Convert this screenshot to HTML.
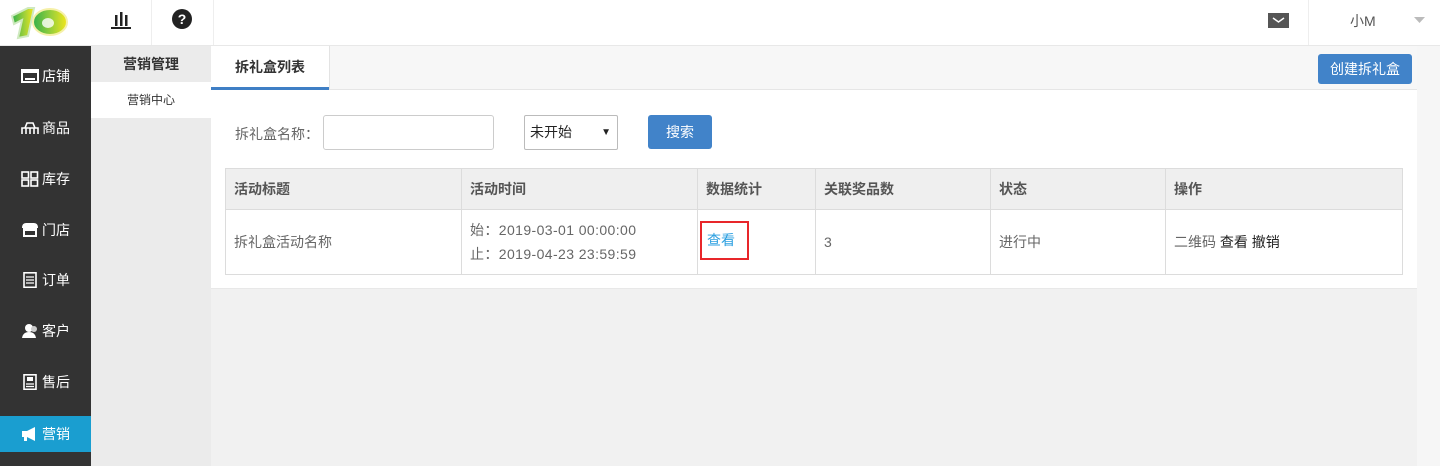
<!DOCTYPE html>
<html><head><meta charset="utf-8"><style>
*{margin:0;padding:0;box-sizing:border-box}
body{width:1440px;height:466px;overflow:hidden;background:#f1f1f1;font-family:"Liberation Sans","Noto Sans CJK SC",sans-serif;font-size:14px;color:#666;position:relative}
.abs{position:absolute}
.top{left:0;top:0;width:1440px;height:46px;background:#fff;border-bottom:1px solid #e8e8e8}
.side{left:0;top:46px;width:91px;height:420px;background:#333}
.si{position:absolute;left:0;width:91px;height:36px;color:#fff;font-size:14px;line-height:36px;padding-left:21px;display:flex;align-items:center;gap:3px}
.si svg{flex:none}
.sub{left:91px;top:46px;width:120px;height:420px;background:#ebebeb}
.main{left:211px;top:46px;width:1206px;height:420px;background:#f1f1f1}
.rstrip{left:1417px;top:46px;width:23px;height:420px;background:#f6f6f6}
table{border-collapse:collapse;position:absolute;left:225px;top:168px;width:1178px}
td,th{border:1px solid #dcdcdc;text-align:left;padding-left:8px;font-size:14px;color:#666}
th{background:#efefef;height:41px;font-weight:bold;color:#555}
td{height:65px;background:#fff}
</style></head><body>
<div class="abs top"></div>
<svg class="abs" style="left:8px;top:2px" width="62" height="40" viewBox="0 0 62 40">
<defs><linearGradient id="g" x1="0" x2="1"><stop offset="0" stop-color="#33b04a"/><stop offset="0.55" stop-color="#9cd03a"/><stop offset="1" stop-color="#f1e61a"/></linearGradient></defs>
<path d="M4 14 L20 6 L26 6 L20 34 L10 36 L14 18 L6 22Z" fill="url(#g)" stroke="#cfe9c0" stroke-width="2"/>
<ellipse cx="42" cy="20" rx="17" ry="13" fill="url(#g)" stroke="#f5f0a8" stroke-width="2"/>
<ellipse cx="40" cy="21" rx="6" ry="5" fill="#fff" opacity=".8"/>
</svg>
<div class="abs" style="left:151px;top:0;width:1px;height:45px;background:#eee"></div>
<div class="abs" style="left:213px;top:0;width:1px;height:45px;background:#eee"></div>
<div class="abs" style="left:1308px;top:0;width:1px;height:45px;background:#eee"></div>
<svg class="abs" style="left:110px;top:10px" width="22" height="20" viewBox="0 0 22 20"><rect x="5" y="5" width="2.5" height="11" fill="#222"/><rect x="10" y="2" width="2.5" height="14" fill="#222"/><rect x="15" y="5" width="2.5" height="11" fill="#222"/><rect x="1" y="17" width="20" height="2" fill="#222"/></svg>
<svg class="abs" style="left:172px;top:9px" width="20" height="20" viewBox="0 0 20 20"><circle cx="10" cy="10" r="10" fill="#222"/><text x="10" y="15" text-anchor="middle" font-family="Liberation Sans" font-weight="bold" font-size="14" fill="#fff">?</text></svg>
<svg class="abs" style="left:1268px;top:13px" width="21" height="15" viewBox="0 0 21 15"><rect width="21" height="15" fill="#555"/><path d="M5 5 L10.5 9 L16 5" stroke="#fff" stroke-width="1.5" fill="none"/></svg>
<div class="abs" style="left:1350px;top:11px;font-size:14px;color:#555">小M</div>
<svg class="abs" style="left:1414px;top:17px" width="11" height="6"><path d="M0 0H11L5.5 6Z" fill="#bbb"/></svg>

<div class="abs side"></div>
<div class="abs" style="left:0;top:416px;width:91px;height:36px;background:#1a9ed0"></div>
<div class="si" style="top:58px"><svg width="18" height="14"><rect x="0" y="0" width="18" height="14" fill="#fff"/><rect x="2" y="4" width="14" height="8" fill="#333"/><rect x="4" y="9" width="10" height="2" fill="#fff"/></svg>店铺</div>
<div class="si" style="top:110px"><svg width="18" height="14"><path d="M1 13V7H17V13M4 7L6 2H12L14 7M5 7V13M9 7V13M13 7V13" stroke="#fff" stroke-width="1.6" fill="none"/></svg>商品</div>
<div class="si" style="top:161px"><svg width="18" height="16"><rect x="1" y="1" width="6.5" height="6" fill="none" stroke="#fff" stroke-width="1.6"/><rect x="10" y="1" width="6.5" height="6" fill="none" stroke="#fff" stroke-width="1.6"/><rect x="1" y="9" width="6.5" height="6" fill="none" stroke="#fff" stroke-width="1.6"/><rect x="10" y="9" width="6.5" height="6" fill="none" stroke="#fff" stroke-width="1.6"/></svg>库存</div>
<div class="si" style="top:212px"><svg width="18" height="16"><path d="M1 6Q1 1 5 1H13Q17 1 17 6Z" fill="#fff"/><rect x="2" y="6" width="14" height="9" fill="#fff"/><rect x="4" y="9" width="10" height="4" fill="#333"/></svg>门店</div>
<div class="si" style="top:262px"><svg width="18" height="16"><rect x="3" y="0.8" width="12" height="14.5" fill="none" stroke="#fff" stroke-width="1.6"/><path d="M5 5H13M5 8H13M5 11H13" stroke="#fff" stroke-width="1.3"/></svg>订单</div>
<div class="si" style="top:313px"><svg width="18" height="16"><circle cx="8" cy="5" r="4" fill="#fff"/><path d="M1 15Q2 9 8 9Q14 9 15 15Z" fill="#fff"/><circle cx="13" cy="6" r="3" fill="#ccc"/></svg>客户</div>
<div class="si" style="top:364px"><svg width="18" height="16"><rect x="3" y="0.8" width="12" height="14.5" fill="none" stroke="#fff" stroke-width="1.6"/><rect x="6" y="3" width="6" height="4" fill="#fff"/><path d="M5 10H13M5 12.5H13" stroke="#fff" stroke-width="1.3"/></svg>售后</div>
<div class="si" style="top:416px"><svg width="18" height="16"><path d="M1 5H6L14 1V15L6 11H1Z" fill="#fff"/><rect x="3" y="11" width="3" height="4" fill="#fff"/></svg>营销</div>

<div class="abs sub"></div>
<div class="abs" style="left:91px;top:46px;width:120px;height:36px;line-height:36px;text-align:center;font-weight:bold;color:#333">营销管理</div>
<div class="abs" style="left:91px;top:82px;width:120px;height:36px;background:#fff;line-height:36px;text-align:center;font-size:12px;color:#333">营销中心</div>

<div class="abs main"></div>
<div class="abs rstrip"></div>
<div class="abs" style="left:211px;top:46px;width:1206px;height:44px;background:#f7f7f7;border-bottom:1px solid #e6e6e6"></div>
<div class="abs" style="left:211px;top:46px;width:118px;height:44px;background:#fff;border-bottom:3px solid #3f7fc5;text-align:center;line-height:42px;font-weight:bold;color:#333">拆礼盒列表</div>
<div class="abs" style="left:329px;top:46px;width:1px;height:44px;background:#e3e3e3"></div>
<div class="abs" style="left:1318px;top:54px;width:94px;height:30px;background:#4183c9;border-radius:3px;color:#fff;line-height:30px;text-align:center">创建拆礼盒</div>
<div class="abs" style="left:211px;top:90px;width:1206px;height:199px;background:#fff;border-bottom:1px solid #e8e8e8"></div>

<div class="abs" style="left:235px;top:124px;color:#666">拆礼盒名称：</div>
<div class="abs" style="left:323px;top:115px;width:171px;height:35px;border:1px solid #ccc;border-radius:3px"></div>
<div class="abs" style="left:524px;top:115px;width:94px;height:35px;border:1px solid #bbb;border-radius:2px;color:#222;line-height:33px;padding-left:5px">未开始<span style="position:absolute;right:6px;font-size:10px">▼</span></div>
<div class="abs" style="left:648px;top:115px;width:64px;height:34px;background:#4183c9;border-radius:3px;color:#fff;line-height:34px;text-align:center">搜索</div>

<table>
<tr><th style="width:236px">活动标题</th><th style="width:236px">活动时间</th><th style="width:118px">数据统计</th><th style="width:175px">关联奖品数</th><th style="width:175px">状态</th><th>操作</th></tr>
<tr><td>拆礼盒活动名称</td><td style="line-height:24px;letter-spacing:0.4px">始：2019-03-01 00:00:00<br>止：2019-04-23 23:59:59</td><td><span style="display:inline-block;margin-left:-6px;margin-top:-4px;border:2px solid #e8262a;padding:7px 12px 8px 5px;color:#2b9fe0">查看</span></td><td>3</td><td>进行中</td><td>二维码 <span style="color:#222">查看 撤销</span></td></tr>
</table>
</body></html>
